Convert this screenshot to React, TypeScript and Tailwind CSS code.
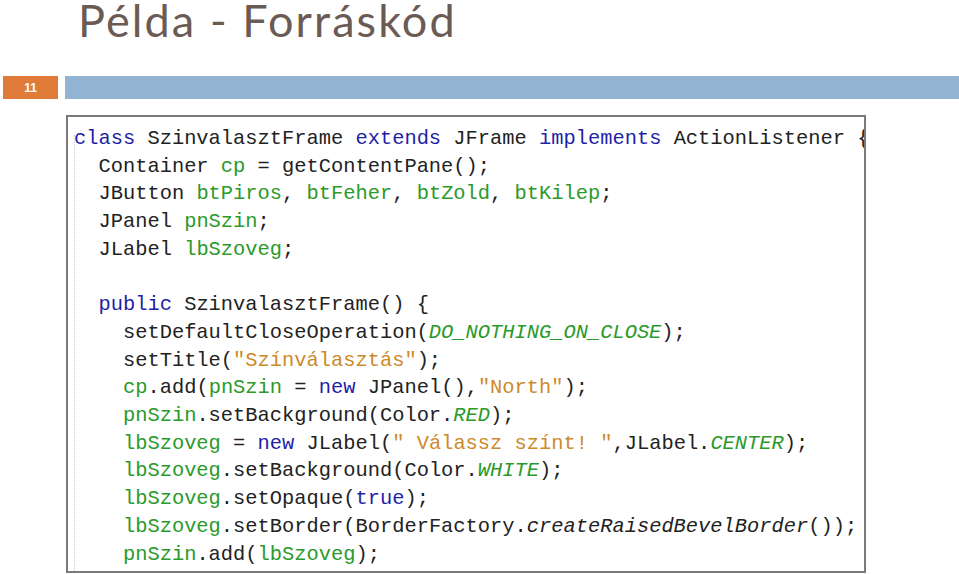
const K = "text-[#1f1fa8]";
const F = "text-[#2a9a2a]";
const S = "text-[#cc8a2a]";

type Seg = [string, string?];

const lines: Seg[][] = [
  [["class", K], [" SzinvalasztFrame "], ["extends", K], [" JFrame "], ["implements", K], [" ActionListener {"]],
  [["  Container "], ["cp", F], [" = getContentPane();"]],
  [["  JButton "], ["btPiros", F], [", "], ["btFeher", F], [", "], ["btZold", F], [", "], ["btKilep", F], [";"]],
  [["  JPanel "], ["pnSzin", F], [";"]],
  [["  JLabel "], ["lbSzoveg", F], [";"]],
  [[" "]],
  [["  "], ["public", K], [" SzinvalasztFrame() {"]],
  [["    setDefaultCloseOperation("], ["DO_NOTHING_ON_CLOSE", F + " italic"], [");"]],
  [["    setTitle("], ['"Színválasztás"', S], [");"]],
  [["    "], ["cp", F], ["."], ["add("], ["pnSzin", F], [" = "], ["new", K], [" JPanel(),"], ['"North"', S], [");"]],
  [["    "], ["pnSzin", F], [".setBackground(Color."], ["RED", F + " italic"], [");"]],
  [["    "], ["lbSzoveg", F], [" = "], ["new", K], [" JLabel("], ['" Válassz színt! "', S], [",JLabel."], ["CENTER", F + " italic"], [");"]],
  [["    "], ["lbSzoveg", F], [".setBackground(Color."], ["WHITE", F + " italic"], [");"]],
  [["    "], ["lbSzoveg", F], [".setOpaque("], ["true", K], [");"]],
  [["    "], ["lbSzoveg", F], [".setBorder(BorderFactory."], ["createRaisedBevelBorder", "italic"], ["());"]],
  [["    "], ["pnSzin", F], [".add("], ["lbSzoveg", F], [");"]],
];

export default function App() {
  return (
    <div className="w-[959px] h-[574px] bg-white overflow-hidden">
      {/* title */}
      <div className="h-[59px] pl-[78px] pt-0 overflow-visible">
        <h1 className="font-['Lato',sans-serif] text-[45px] leading-[40px] text-[#6b5b55] tracking-[2.1px]">
          Példa - Forráskód
        </h1>
      </div>

      {/* slide number + bar */}
      <div className="flex mt-[17px] h-[23px] gap-[7px] pl-[3px]">
        <div className="w-[55px] bg-[#e07b39] flex items-center justify-center text-white text-[12px] font-semibold font-['Liberation_Sans',sans-serif]">
          11
        </div>
        <div className="flex-1 bg-[#93b3d3]" />
      </div>

      {/* code screenshot */}
      <div className="ml-[66px] mt-[16px] w-[800px] h-[458px] border-2 border-[#7a7a7a] bg-white relative overflow-hidden">
        <div className="absolute left-[6px] top-[18px] bottom-0 border-l border-dotted border-[#c8c8c8]" />
        <pre className="pl-[6px] pt-[8px] font-['Liberation_Mono',monospace] text-[20.4px] leading-[27.7px] text-[#222] whitespace-pre">
          {lines.map((ln, i) => (
            <div key={i}>
              {ln.map(([t, c], j) => (
                <span key={j} className={c}>
                  {t}
                </span>
              ))}
            </div>
          ))}
        </pre>
      </div>
    </div>
  );
}
